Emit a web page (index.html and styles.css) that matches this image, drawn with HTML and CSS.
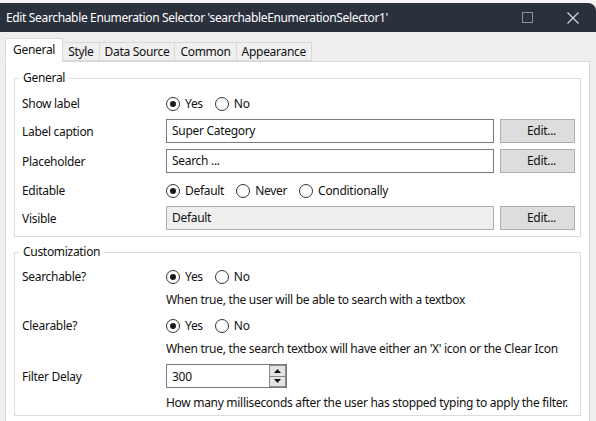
FILE: index.html
```html
<!DOCTYPE html>
<html>
<head>
<meta charset="utf-8">
<link rel="stylesheet" href="styles.css">
</head>
<body>
<div class="window">
  <div class="topstrip"></div>
  <div class="titlebar">
    <span class="title">Edit Searchable Enumeration Selector 'searchableEnumerationSelector1'</span>
    <span class="tb-btn"><svg width="11" height="11" viewBox="0 0 11 11"><rect x="0.5" y="0.5" width="10" height="10" fill="none" stroke="#8d909a" stroke-width="1"/></svg></span>
    <span class="tb-btn"><svg width="12" height="12" viewBox="0 0 12 12"><path d="M0.5 0.5 L11.5 11.5 M11.5 0.5 L0.5 11.5" stroke="#dcdde0" stroke-width="1.1" fill="none"/></svg></span>
  </div>
  <div class="tabs">
    <div class="tab active">General</div>
    <div class="tab">Style</div>
    <div class="tab">Data Source</div>
    <div class="tab">Common</div>
    <div class="tab">Appearance</div>
  </div>
  <div class="panel">
    <fieldset class="group group-general">
      <legend>General</legend>
      <div class="row row-radio">
        <span class="label">Show label</span>
        <div class="radios">
          <span class="radio checked"></span><span class="rtext">Yes</span>
          <span class="radio"></span><span class="rtext">No</span>
        </div>
      </div>
      <div class="row">
        <span class="label">Label caption</span>
        <div class="input">Super Category</div>
        <div class="btn">Edit...</div>
      </div>
      <div class="row">
        <span class="label">Placeholder</span>
        <div class="input">Search ...</div>
        <div class="btn">Edit...</div>
      </div>
      <div class="row row-radio">
        <span class="label">Editable</span>
        <div class="radios">
          <span class="radio checked"></span><span class="rtext">Default</span>
          <span class="radio"></span><span class="rtext">Never</span>
          <span class="radio"></span><span class="rtext">Conditionally</span>
        </div>
      </div>
      <div class="row">
        <span class="label">Visible</span>
        <div class="input disabled">Default</div>
        <div class="btn">Edit...</div>
      </div>
    </fieldset>

    <fieldset class="group group-custom">
      <legend>Customization</legend>
      <div class="row row-radio first">
        <span class="label">Searchable?</span>
        <div class="radios">
          <span class="radio checked"></span><span class="rtext">Yes</span>
          <span class="radio"></span><span class="rtext">No</span>
        </div>
      </div>
      <div class="hint">When true, the user will be able to search with a textbox</div>
      <div class="row row-radio">
        <span class="label">Clearable?</span>
        <div class="radios">
          <span class="radio checked"></span><span class="rtext">Yes</span>
          <span class="radio"></span><span class="rtext">No</span>
        </div>
      </div>
      <div class="hint">When true, the search textbox will have either an 'X' icon or the Clear Icon</div>
      <div class="row row-spin">
        <span class="label">Filter Delay</span>
        <div class="spinner">
          <span class="spin-value">300</span>
          <div class="spin-btns">
            <span class="spin-btn"><svg width="7" height="4" viewBox="0 0 7 4"><path d="M3.5 0 L7 4 L0 4 Z" fill="#111"/></svg></span>
            <span class="spin-btn"><svg width="7" height="4" viewBox="0 0 7 4"><path d="M0 0 L7 0 L3.5 4 Z" fill="#111"/></svg></span>
          </div>
        </div>
      </div>
      <div class="hint">How many milliseconds after the user has stopped typing to apply the filter.</div>
    </fieldset>
  </div>
</div>
</body>
</html>
```

FILE: styles.css
```css
* { box-sizing: border-box; }

body {
  margin: 0;
  font-family: "Noto Sans", "Open Sans", sans-serif;
  font-size: 12px;
  letter-spacing: -0.3px;
  color: #111;
}

.window {
  width: 596px;
  height: 421px;
  overflow: hidden;
  background: #eeeeee;
}

.topstrip {
  height: 3px;
  background: #f5f5f5;
}

.titlebar {
  height: 29px;
  background: #2b303d;
  color: #ffffff;
  display: flex;
  align-items: center;
  padding-left: 6px;
  border-top-right-radius: 8px;
}

.title {
  flex: 1;
  font-size: 12px;
  letter-spacing: -0.35px;
  white-space: nowrap;
}

.tb-btn {
  width: 46px;
  height: 29px;
  display: flex;
  align-items: center;
  justify-content: center;
}

.tabs {
  display: flex;
  align-items: flex-end;
  margin: 6px 0 0 5px;
  height: 23px;
  position: relative;
  z-index: 1;
}

.tab {
  height: 19px;
  line-height: 17px;
  padding: 0 5px;
  border: 1px solid #d9d9d9;
  margin-left: -1px;
  background: #efefef;
  white-space: nowrap;
}

.tab.active {
  height: 24px;
  line-height: 22px;
  margin-left: 0;
  margin-bottom: -1px;
  padding: 0 7px;
  background: #ffffff;
  border-bottom-color: #ffffff;
}

.panel {
  margin: 0 6px 0 5px;
  background: #ffffff;
  border: 1px solid #d9d9d9;
  padding: 0 8px;
  height: 400px;
}

.group {
  border: 1px solid #dcdcdc;
  margin: 0;
  padding: 6px 5px 6px 7px;
  min-width: 0;
}

.group legend {
  padding: 0 4px;
  margin-left: -3px;
  line-height: 16px;
  color: #111;
}

.group-general { margin-top: 8px; }
.group-custom { margin-top: 7px; padding-bottom: 2px; }

.row {
  display: grid;
  grid-template-columns: 138px 328px 75px;
  column-gap: 6px;
  align-items: center;
  height: 24px;
  margin-top: 6px;
}

.group .row:first-of-type { margin-top: 0; }

.row-radio { height: 21px; }
.group-general .row-radio { padding-top: 2px; }
.group-custom .row-radio { margin-top: 5px; }
.group-custom .row-radio.first { margin-top: 0; }
.row-spin { margin-top: 5px; }

.label { white-space: nowrap; }

.radios {
  grid-column: 2 / span 2;
  display: flex;
  align-items: center;
}

.radio {
  width: 14px;
  height: 14px;
  border: 1px solid #333;
  border-radius: 50%;
  display: flex;
  align-items: center;
  justify-content: center;
  flex: none;
}

.radio.checked::after {
  content: "";
  width: 6px;
  height: 6px;
  border-radius: 50%;
  background: #1a1a1a;
}

.rtext {
  margin: 0 12px 0 5px;
}

.input {
  height: 24px;
  border: 1px solid #7a7a7a;
  padding-left: 5px;
  line-height: 22px;
  background: #fff;
  white-space: nowrap;
}

.input.disabled {
  background: #efefef;
  border-color: #aeaeae;
}

.btn {
  height: 24px;
  border: 1px solid #adadad;
  background: #dddddd;
  text-align: center;
  line-height: 22px;
  padding-left: 8px;
}

.hint {
  margin: 3px 0 0 144px;
  height: 20px;
  line-height: 20px;
  white-space: nowrap;
}

.row-spin + .hint { margin-top: 5px; }

.spinner {
  width: 121px;
  height: 24px;
  border: 1px solid #7a7a7a;
  display: flex;
  align-items: center;
  justify-content: space-between;
  padding-left: 5px;
}

.spin-btns {
  display: flex;
  flex-direction: column;
  width: 17px;
  height: 22px;
}

.spin-btn {
  flex: 1;
  background: #e4e4e4;
  border: 1px solid #8a8a8a;
  display: flex;
  align-items: center;
  justify-content: center;
}

.spin-btn + .spin-btn { border-top: none; }
```
